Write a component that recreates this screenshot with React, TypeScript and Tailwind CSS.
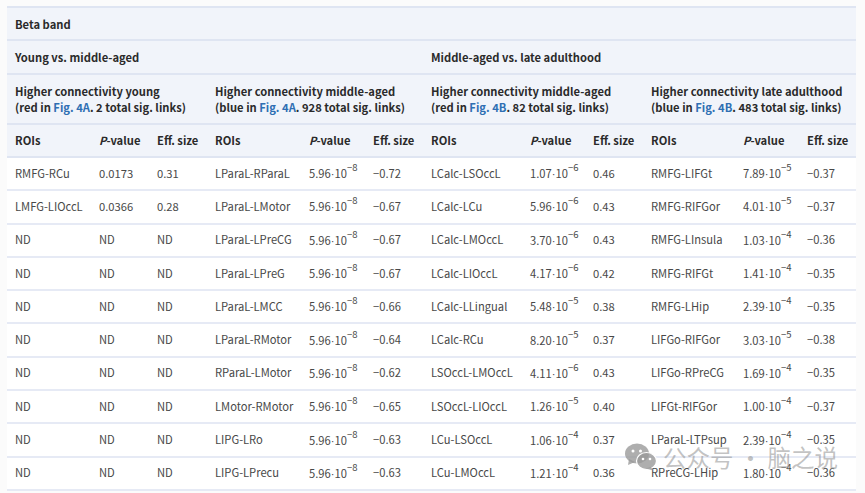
const F = 'Fig.\u00a0'

function Pv({ m, e }: { m: string; e: string }) {
  return (
    <span className="whitespace-nowrap">
      {m}
      <span className="font-['Liberation_Sans']">·</span>10
      <sup className="static align-[7px] text-[9.5px] leading-none">{'\u2212' + e}</sup>
    </span>
  )
}

function FigLink({ label }: { label: string }) {
  return <a className="text-[#2f6fb3]">{F + label}</a>
}

const groups = [
  { title: 'Higher connectivity young', color: 'red', fig: '4A', total: '2' },
  { title: 'Higher connectivity middle-aged', color: 'blue', fig: '4A', total: '928' },
  { title: 'Higher connectivity middle-aged', color: 'red', fig: '4B', total: '82' },
  { title: 'Higher connectivity late adulthood', color: 'blue', fig: '4B', total: '483' },
]

const rows = [
  ['RMFG-RCu', '0.0173', '0.31', 'LParaL-RParaL', '5.96', '8', '\u22120.72', 'LCalc-LSOccL', '1.07', '6', '0.46', 'RMFG-LIFGt', '7.89', '5', '\u22120.37'],
  ['LMFG-LIOccL', '0.0366', '0.28', 'LParaL-LMotor', '5.96', '8', '\u22120.67', 'LCalc-LCu', '5.96', '6', '0.43', 'RMFG-RIFGor', '4.01', '5', '\u22120.37'],
  ['ND', 'ND', 'ND', 'LParaL-LPreCG', '5.96', '8', '\u22120.67', 'LCalc-LMOccL', '3.70', '6', '0.43', 'RMFG-LInsula', '1.03', '4', '\u22120.36'],
  ['ND', 'ND', 'ND', 'LParaL-LPreG', '5.96', '8', '\u22120.67', 'LCalc-LIOccL', '4.17', '6', '0.42', 'RMFG-RIFGt', '1.41', '4', '\u22120.35'],
  ['ND', 'ND', 'ND', 'LParaL-LMCC', '5.96', '8', '\u22120.66', 'LCalc-LLingual', '5.48', '5', '0.38', 'RMFG-LHip', '2.39', '4', '\u22120.35'],
  ['ND', 'ND', 'ND', 'LParaL-RMotor', '5.96', '8', '\u22120.64', 'LCalc-RCu', '8.20', '5', '0.37', 'LIFGo-RIFGor', '3.03', '5', '\u22120.38'],
  ['ND', 'ND', 'ND', 'RParaL-LMotor', '5.96', '8', '\u22120.62', 'LSOccL-LMOccL', '4.11', '6', '0.43', 'LIFGo-RPreCG', '1.69', '4', '\u22120.35'],
  ['ND', 'ND', 'ND', 'LMotor-RMotor', '5.96', '8', '\u22120.65', 'LSOccL-LIOccL', '1.26', '5', '0.40', 'LIFGt-RIFGor', '1.00', '4', '\u22120.37'],
  ['ND', 'ND', 'ND', 'LIPG-LRo', '5.96', '8', '\u22120.63', 'LCu-LSOccL', '1.06', '4', '0.37', 'LParaL-LTPsup', '2.39', '4', '\u22120.35'],
  ['ND', 'ND', 'ND', 'LIPG-LPrecu', '5.96', '8', '\u22120.63', 'LCu-LMOccL', '1.21', '4', '0.36', 'RPreCG-LHip', '1.80', '4', '\u22120.36'],
]

const widths = ['w-[84px]', 'w-[58px]', 'w-[58px]', 'w-[94px]', 'w-[64px]', 'w-[58px]', 'w-[99px]', 'w-[63px]', 'w-[58px]', 'w-[92px]', 'w-[64px]', 'w-[57px]']

const headCell = 'px-2 text-left font-semibold align-middle whitespace-nowrap border-b-2 border-[#dfe5f2]'
const bodyCell = 'px-2 pb-[2px] align-middle whitespace-nowrap border-b-2 border-[#e6eaf5]'

export default function App() {
  return (
    <div className="relative h-[493px] w-[865px] overflow-hidden bg-[#fbfbfb] pt-[6px] pl-[7px] font-['Noto_Sans_CJK_SC','Source_Sans_Pro',sans-serif] text-[11.2px] leading-4 text-[#484848]">
      <table className="w-[849px] table-fixed border-separate border-spacing-0 border-t-2 border-[#dfe5f2] bg-white">
        <colgroup>
          {widths.map((w, i) => (
            <col key={i} className={w} />
          ))}
        </colgroup>
        <thead className="bg-[#f1f4fa] text-[#2a2a2a]">
          <tr className="h-[33px]">
            <th colSpan={12} className={headCell}>
              Beta band
            </th>
          </tr>
          <tr className="h-[34px]">
            <th colSpan={6} className={headCell}>
              Young vs. middle-aged
            </th>
            <th colSpan={6} className={headCell}>
              Middle-aged vs. late adulthood
            </th>
          </tr>
          <tr className="h-[50px]">
            {groups.map((g, i) => (
              <th key={i} colSpan={3} className={headCell}>
                {g.title}
                <br />({g.color} in <FigLink label={g.fig} />. {g.total} total sig. links)
              </th>
            ))}
          </tr>
          <tr className="h-[33px]">
            {groups.flatMap((_, i) => [
              <th key={i + 'r'} className={headCell + ' pb-[2px]'}>
                ROIs
              </th>,
              <th key={i + 'p'} className={headCell + ' pb-[2px]'}>
                <i>P</i>-value
              </th>,
              <th key={i + 'e'} className={headCell + ' pb-[2px]'}>
                Eff. size
              </th>,
            ])}
          </tr>
        </thead>
        <tbody>
          {rows.map((r, i) => (
            <tr key={i} className="h-[33.3px]">
              <td className={bodyCell}>{r[0]}</td>
              <td className={bodyCell}>{r[1]}</td>
              <td className={bodyCell}>{r[2]}</td>
              <td className={bodyCell}>{r[3]}</td>
              <td className={bodyCell}>
                <Pv m={r[4]} e={r[5]} />
              </td>
              <td className={bodyCell}>{r[6]}</td>
              <td className={bodyCell}>{r[7]}</td>
              <td className={bodyCell}>
                <Pv m={r[8]} e={r[9]} />
              </td>
              <td className={bodyCell}>{r[10]}</td>
              <td className={bodyCell}>{r[11]}</td>
              <td className={bodyCell}>
                <Pv m={r[12]} e={r[13]} />
              </td>
              <td className={bodyCell}>{r[14]}</td>
            </tr>
          ))}
        </tbody>
      </table>

      {/* watermark */}
      <div className="absolute left-[625px] top-[443px] flex items-center gap-[6px] text-[#8f8f8f]/55">
        <svg width="32" height="28" viewBox="0 0 32 28" className="text-[#9a9a9a]/80">
          <ellipse cx="12" cy="10.5" rx="12" ry="10" fill="currentColor" />
          <path d="M4 16 L3 22 L10 19 Z" fill="currentColor" />
          <ellipse cx="21.5" cy="18" rx="10" ry="8.5" stroke="#fff" strokeWidth="1.2" fill="currentColor" />
          <path d="M26 24 L28 27.5 L21 25.5 Z" fill="currentColor" />
          <circle cx="8" cy="8" r="1.5" fill="#fff" />
          <circle cx="15.5" cy="8" r="1.5" fill="#fff" />
          <circle cx="18" cy="16" r="1.3" fill="#fff" />
          <circle cx="25" cy="16" r="1.3" fill="#fff" />
        </svg>
        <span className="text-[23.5px] leading-7 whitespace-nowrap">公众号 · 脑之说</span>
      </div>
    </div>
  )
}
